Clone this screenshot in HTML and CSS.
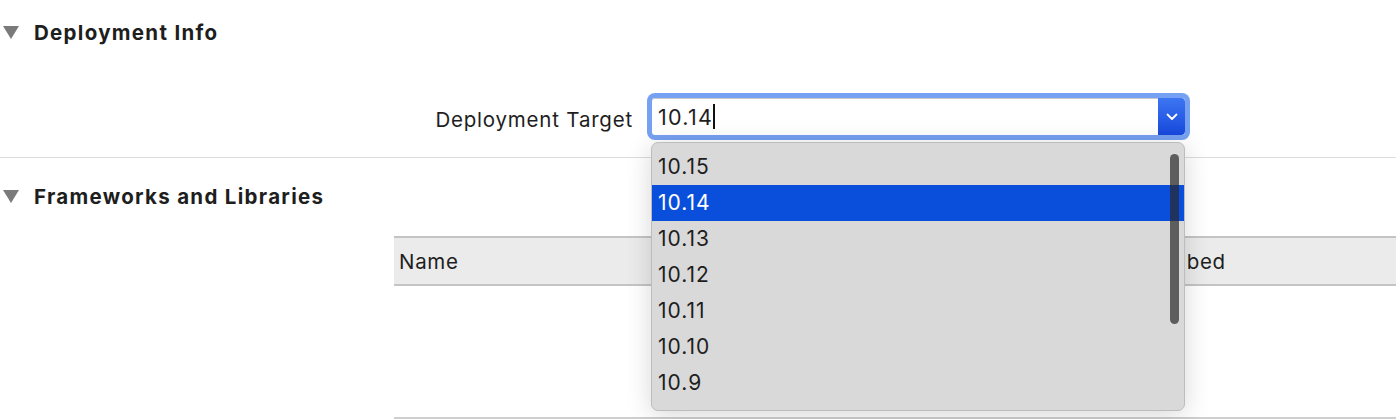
FILE: index.html
```html
<!DOCTYPE html>
<html lang="en">
<head>
  <meta charset="UTF-8">
  <title>General</title>
  <link rel="stylesheet" href="styles.css">
</head>
<body>
  <div class="section">
    <div class="section-head">
      <span class="disclosure"></span>
      <span class="section-title">Deployment Info</span>
    </div>

    <div class="field-row">
      <label class="field-label">Deployment Target</label>
      <div class="combo">
        <div class="combo-field">
          <span class="combo-value">10.14</span><span class="caret"></span>
          <div class="combo-btn">
            <svg width="12" height="8" viewBox="0 0 12 8"><path d="M1.5 1.5 L6 6 L10.5 1.5" fill="none" stroke="#fff" stroke-width="1.8" stroke-linecap="round" stroke-linejoin="round"/></svg>
          </div>
        </div>

        <div class="popup">
          <div class="popup-item">10.15</div>
          <div class="popup-item selected">10.14</div>
          <div class="popup-item">10.13</div>
          <div class="popup-item">10.12</div>
          <div class="popup-item">10.11</div>
          <div class="popup-item">10.10</div>
          <div class="popup-item">10.9</div>
          <div class="scroller"></div>
        </div>
      </div>
    </div>
  </div>

  <div class="section second">
    <div class="section-head">
      <span class="disclosure"></span>
      <span class="section-title">Frameworks and Libraries</span>
    </div>

    <div class="table">
      <div class="table-head">
        <div class="col-name">Name</div>
        <div class="col-embed">Embed</div>
      </div>
      <div class="table-body"></div>
    </div>
  </div>
</body>
</html>
```

FILE: styles.css
```css
body {
  margin: 0;
  background: #fff;
  color: #1e1e1e;
  font-family: Inter, 'Noto Sans', sans-serif;
  overflow: hidden;
}
.section {
  padding-top: 20px;
  padding-bottom: 17px;
}
.section.second {
  border-top: 1px solid #dcdcdc;
  padding-top: 26px;
  padding-bottom: 0;
}
.section-head {
  display: flex;
  align-items: center;
  height: 24px;
}
.disclosure {
  width: 0;
  height: 0;
  margin-left: 3px;
  margin-right: 15px;
  border-left: 8px solid transparent;
  border-right: 8px solid transparent;
  border-top: 13px solid #7a7a7a;
}
.section-title {
  font-size: 20.5px;
  font-weight: 700;
  letter-spacing: 1.3px;
}

/* deployment target row */
.field-row {
  display: flex;
  align-items: center;
  margin-top: 49px;
}
.field-label {
  width: 647px;
  box-sizing: border-box;
  padding-right: 14px;
  padding-top: 6px;
  text-align: right;
  font-size: 20.5px;
  letter-spacing: 0.8px;
}
.combo {
  position: relative;
  width: 543px;
  height: 47px;
  box-sizing: border-box;
  padding: 5px;
  background: #76a1f2;
  border-radius: 8px;
}
.combo-field {
  display: flex;
  align-items: center;
  height: 100%;
  background: #fff;
  border-radius: 3px;
  box-shadow: inset 0 1px 0 #c9c9c9;
  padding-left: 6px;
}
.combo-value {
  font-size: 21.5px;
  letter-spacing: 1.3px;
}
.caret {
  display: inline-block;
  width: 2px;
  height: 25px;
  background: #111;
}
.combo-btn {
  margin-left: auto;
  width: 27px;
  height: 100%;
  display: flex;
  align-items: center;
  justify-content: center;
  background: linear-gradient(#3c76f2, #1848dc);
  border-radius: 0 4px 4px 0;
}

/* opened list */
.popup {
  position: absolute;
  top: 49px;
  left: 4px;
  width: 534px;
  box-sizing: border-box;
  padding: 6px 0 9px;
  background: #d9d9d9;
  border: 1px solid #bdbdbd;
  border-radius: 7px;
  box-shadow: 0 4px 26px rgba(0, 0, 0, 0.16);
  z-index: 5;
}
.popup-item {
  height: 36px;
  line-height: 36px;
  padding-left: 6px;
  font-size: 21px;
  letter-spacing: 1px;
  color: #1e1e1e;
}
.popup-item.selected {
  background: #0a4fdc;
  color: #fff;
}
.scroller {
  position: absolute;
  top: 11px;
  right: 5px;
  width: 9px;
  height: 170px;
  border-radius: 5px;
  background: rgba(40, 40, 40, 0.7);
}

/* frameworks table */
.table {
  margin-top: 28px;
  margin-left: 394px;
}
.table-head {
  display: flex;
  align-items: center;
  height: 46px;
  background: #ebebeb;
  border-top: 2px solid #c4c4c4;
  border-bottom: 2px solid #c4c4c4;
  font-size: 20.5px;
  letter-spacing: 0.7px;
}
.col-name {
  padding-left: 5px;
}
.col-embed {
  margin-left: auto;
  width: 241px;
}
.table-body {
  height: 131px;
  border-bottom: 2px solid #cfcfcf;
}
```
